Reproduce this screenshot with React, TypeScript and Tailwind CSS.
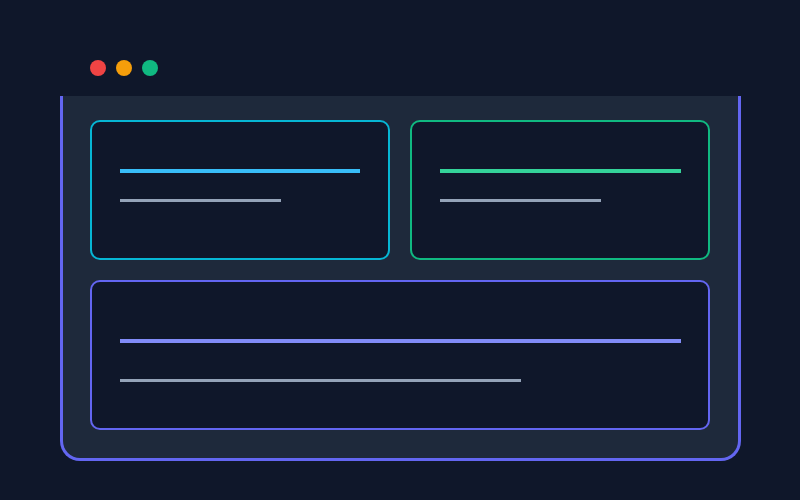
export default function App() {
  return (
    <div className="w-[800px] h-[500px] bg-[#0f172a] overflow-hidden">
      {/* window dots */}
      <div className="flex gap-[10px] pl-[90px] pt-[60px] h-[96px]">
        <span className="w-4 h-4 rounded-full bg-[#ef4444]" />
        <span className="w-4 h-4 rounded-full bg-[#f59e0b]" />
        <span className="w-4 h-4 rounded-full bg-[#10b981]" />
      </div>

      {/* frame */}
      <div className="mx-[60px] w-[681px] h-[365px] bg-[#1e293b] border-x-[3px] border-b-[3px] border-[#6366f1] rounded-b-[20px] px-[27px] pt-[24px] flex flex-col gap-5">
        <div className="flex gap-5">
          <div className="w-[300px] h-[140px] rounded-[10px] border-2 border-[#06b6d4] bg-[#0f172a] pl-[28px] pt-[47px]">
            <div className="w-[240px] h-[4px] bg-[#38bdf8]" />
            <div className="w-[161px] h-[3px] bg-[#94a3b8] mt-[26px]" />
          </div>
          <div className="w-[300px] h-[140px] rounded-[10px] border-2 border-[#10b981] bg-[#0f172a] pl-[28px] pt-[47px]">
            <div className="w-[241px] h-[4px] bg-[#34d399]" />
            <div className="w-[161px] h-[3px] bg-[#94a3b8] mt-[26px]" />
          </div>
        </div>
        <div className="w-[620px] h-[150px] rounded-[10px] border-2 border-[#6366f1] bg-[#0f172a] pl-[28px] pt-[57px]">
          <div className="w-[561px] h-[4px] bg-[#818cf8]" />
          <div className="w-[401px] h-[3px] bg-[#94a3b8] mt-[36px]" />
        </div>
      </div>
    </div>
  )
}
